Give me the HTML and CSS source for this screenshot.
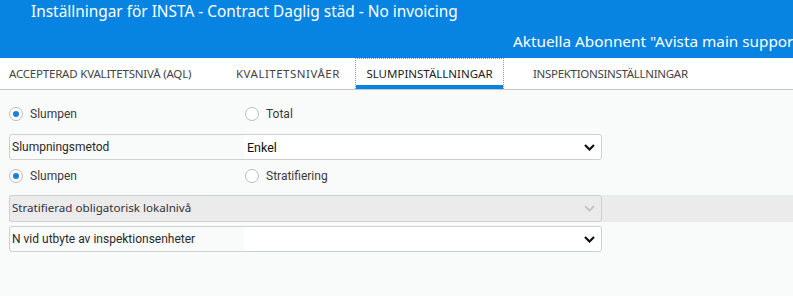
FILE: index.html
```html
<!DOCTYPE html>
<html lang="sv">
<head>
    <meta charset="UTF-8">
    <meta name="viewport" content="width=device-width, initial-scale=1.0">
    <title>Inställningar</title>
    <link rel="stylesheet" href="styles.css">
</head>
<body>
    <div class="header">
        <div class="title">Inställningar för INSTA - Contract Daglig städ - No invoicing</div>
        <div class="subscriber">Aktuella Abonnent "Avista main support"</div>
    </div>

    <div class="tabs">
        <div class="tab first">ACCEPTERAD KVALITETSNIVÅ (AQL)</div>
        <div class="tab second">KVALITETSNIVÅER</div>
        <div class="tab active">SLUMPINSTÄLLNINGAR</div>
        <div class="tab last-tab">INSPEKTIONSINSTÄLLNINGAR</div>
    </div>

    <div class="content">
        <div class="radio-row">
            <label class="radio"><span class="dot checked"></span>Slumpen</label>
            <label class="radio"><span class="dot"></span>Total</label>
        </div>

        <div class="field">
            <div class="field-label">Slumpningsmetod</div>
            <div class="field-select">
                <span>Enkel</span>
                <svg class="chevron" width="11" height="7" viewBox="0 0 11 7"><path d="M1 1 L5.5 5.5 L10 1" fill="none" stroke="#111" stroke-width="2.2"/></svg>
            </div>
        </div>

        <div class="radio-row second">
            <label class="radio"><span class="dot checked"></span>Slumpen</label>
            <label class="radio"><span class="dot"></span>Stratifiering</label>
        </div>

        <div class="disabled-row">
            <div class="field disabled">
                <div class="field-label alt">Stratifierad obligatorisk lokalnivå</div>
                <div class="field-select">
                    <span></span>
                    <svg class="chevron" width="11" height="7" viewBox="0 0 11 7"><path d="M1 1 L5.5 5.5 L10 1" fill="none" stroke="#bdbdbd" stroke-width="1.6"/></svg>
                </div>
            </div>
        </div>

        <div class="field last">
            <div class="field-label">N vid utbyte av inspektionsenheter</div>
            <div class="field-select">
                <span></span>
                <svg class="chevron" width="11" height="7" viewBox="0 0 11 7"><path d="M1 1 L5.5 5.5 L10 1" fill="none" stroke="#111" stroke-width="2.2"/></svg>
            </div>
        </div>
    </div>
</body>
</html>
```

FILE: styles.css
```css
* {
    margin: 0;
    padding: 0;
    box-sizing: border-box;
}

body {
    font-family: Roboto, "Noto Sans", sans-serif;
    background-color: #f9fafa;
    color: #333;
    width: 793px;
    height: 296px;
    overflow: hidden;
}

.header {
    height: 58px;
    background-color: #0784e2;
    color: white;
    overflow: hidden;
    font-family: "Noto Sans", sans-serif;
}

.title {
    padding: 1px 0 0 31px;
    font-size: 15.4px;
    line-height: 22px;
    white-space: nowrap;
}

.subscriber {
    margin-top: 8px;
    padding-left: 513px;
    font-size: 15.3px;
    line-height: 20px;
    white-space: nowrap;
}

/* tabs */
.tabs {
    display: flex;
    height: 32px;
    background-color: white;
    border-bottom: 1px solid #c6c6c6;
    font-family: "Noto Sans", sans-serif;
}

.tab {
    flex: none;
    padding-left: 29px;
    font-size: 11.5px;
    line-height: 31px;
    color: #444;
    white-space: nowrap;
}

.tab.first {
    width: 214px;
    padding-left: 9px;
    letter-spacing: -0.2px;
}

.tab.second {
    width: 141px;
    padding-left: 22px;
    letter-spacing: 0.5px;
}

.tab.last-tab {
    letter-spacing: -0.3px;
}

.tab.active {
    width: 149px;
    padding: 0;
    text-align: center;
    color: #222;
    border: 1px dotted #999;
    border-bottom: none;
    box-shadow: inset 0 -4px 0 #0784e2;
    height: 31px;
    line-height: 29px;
}

/* form */
.content {
    padding: 14px 0 0 9px;
}

.radio-row {
    display: flex;
    height: 20px;
    align-items: center;
}

.radio-row.second {
    margin-top: 6px;
}

.radio {
    display: flex;
    align-items: center;
    width: 236px;
    font-size: 12px;
    color: #3a3a3a;
}

.dot {
    width: 14px;
    height: 14px;
    margin-right: 7px;
    border: 1px solid #bcbcbc;
    border-radius: 50%;
    background-color: white;
    display: flex;
    align-items: center;
    justify-content: center;
}

.dot.checked::after {
    content: "";
    width: 6px;
    height: 6px;
    border-radius: 50%;
    background-color: #1a80e0;
}

.field {
    display: grid;
    grid-template-columns: 234px 1fr;
    width: 593px;
    height: 26px;
    margin-top: 10px;
    border: 1px solid #cfcfcf;
    border-radius: 3px;
}

.field-label {
    padding-left: 2px;
    line-height: 24px;
    font-size: 12px;
    color: #2a2a2a;
    white-space: nowrap;
}

.field-label.alt {
    font-family: "Noto Sans", sans-serif;
    font-size: 11.6px;
    color: #333;
}

.field-select {
    display: flex;
    align-items: center;
    justify-content: space-between;
    padding: 0 6px 0 3px;
    background-color: white;
    border-radius: 0 3px 3px 0;
    font-size: 12.5px;
    color: #111;
}

.disabled-row {
    margin-top: 9px;
    background-color: #ebebeb;
}

.disabled-row .field {
    margin-top: 0;
    height: 27px;
    background-color: #ebebeb;
}

.disabled-row .field-select {
    background-color: #ebebeb;
}

.field.last {
    margin-top: 4px;
}
```
